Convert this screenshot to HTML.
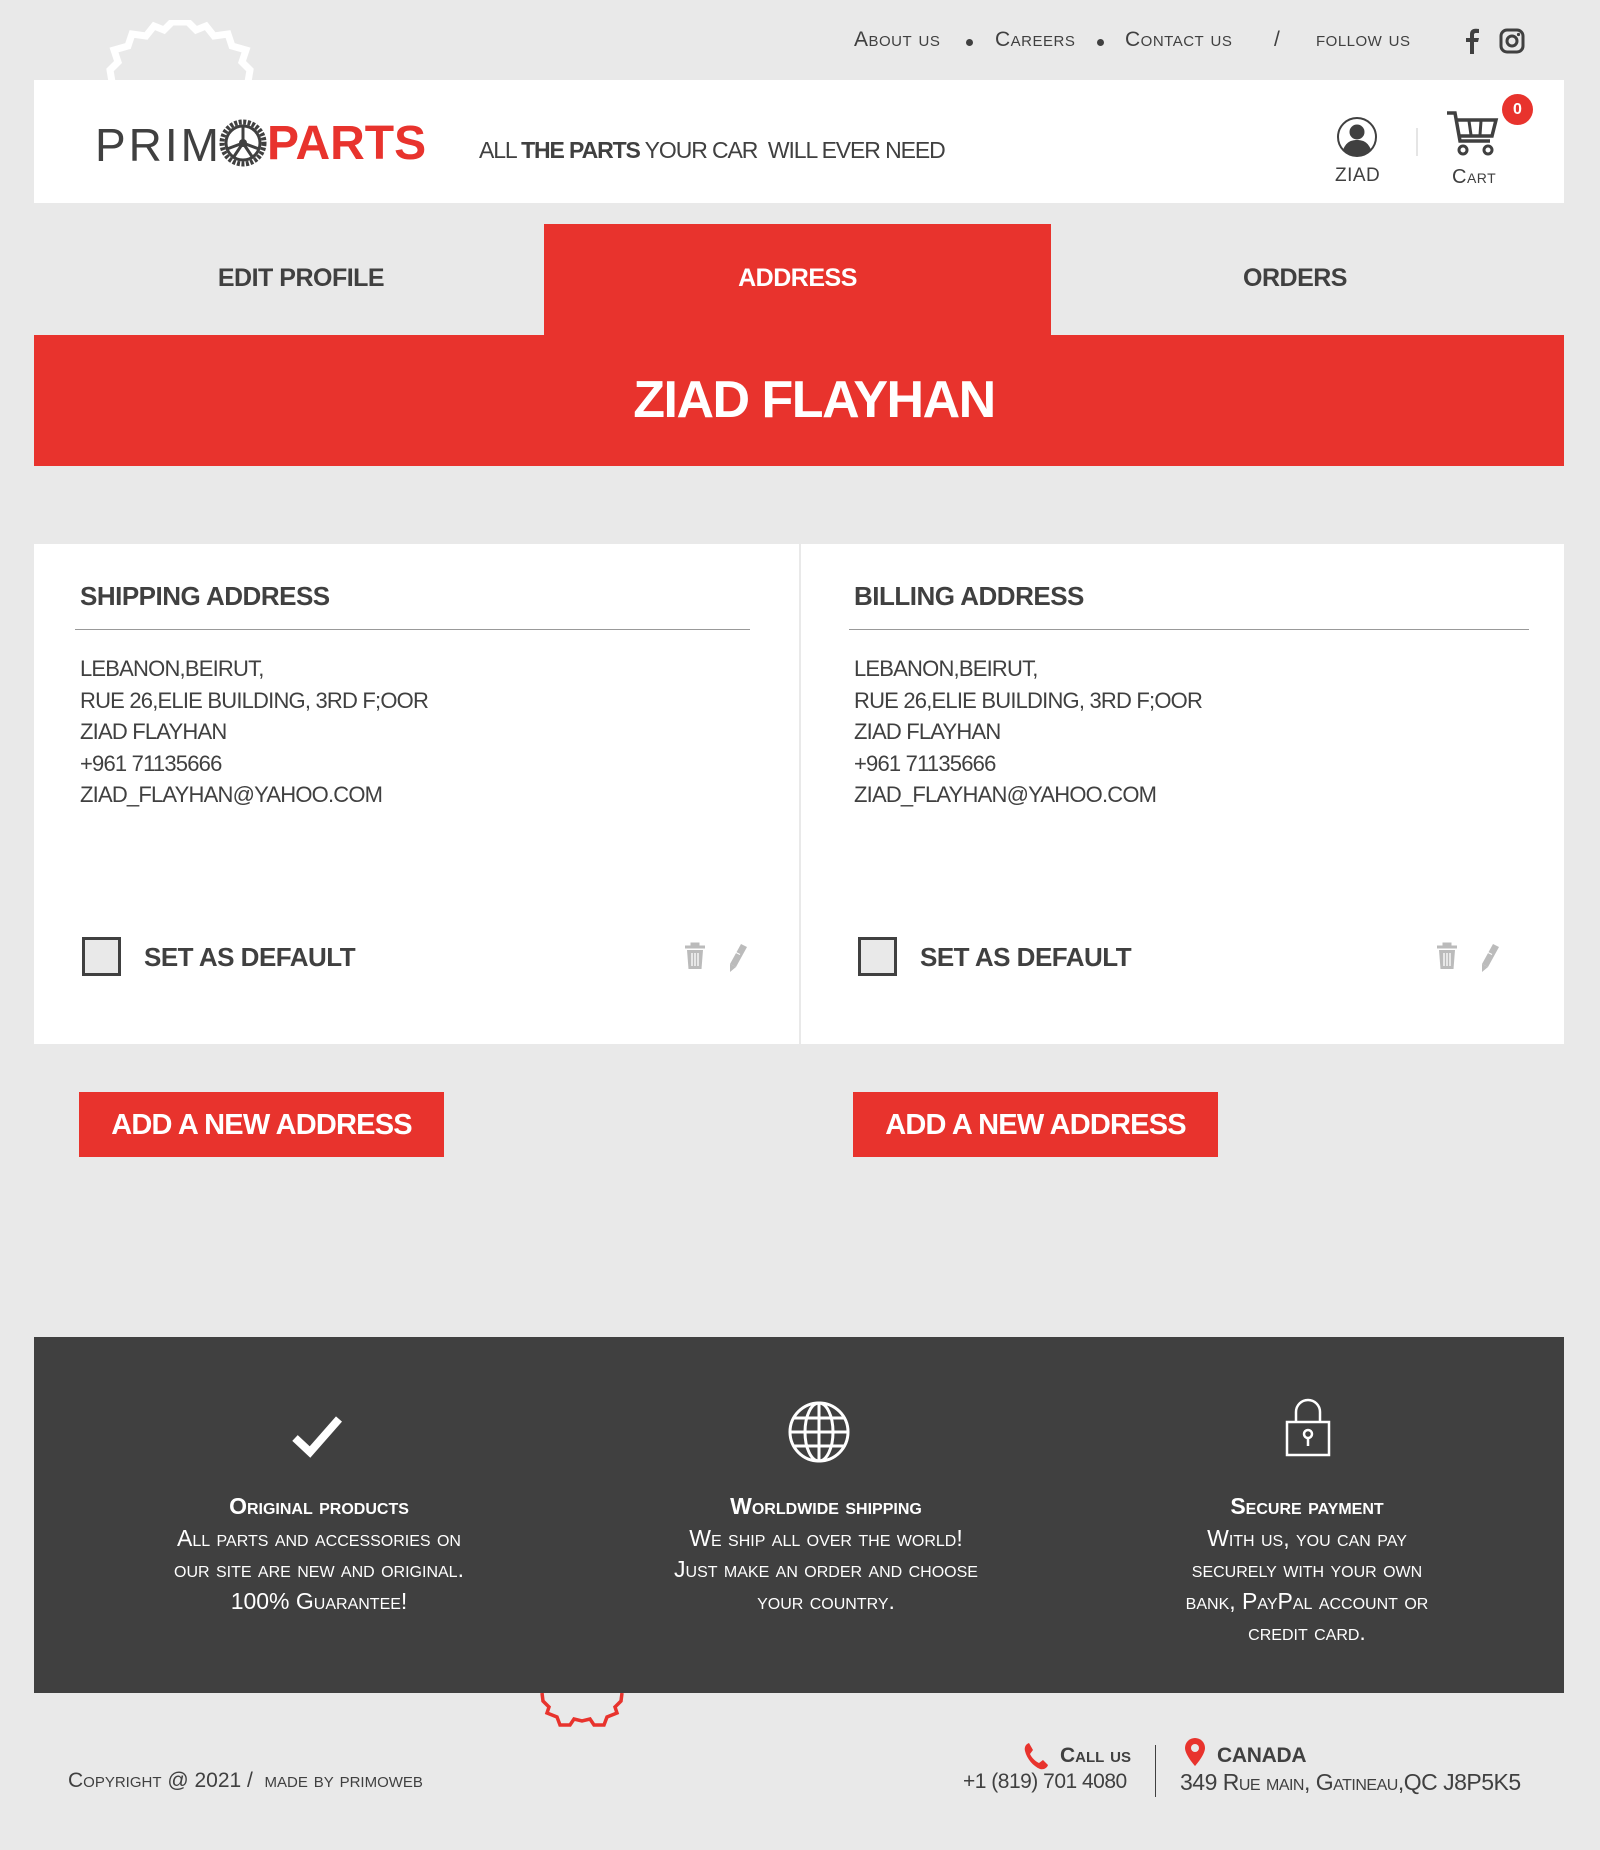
<!DOCTYPE html>
<html><head><meta charset="utf-8">
<style>
*{margin:0;padding:0;box-sizing:border-box}
body{width:1600px;height:1850px;background:#e9e9e9;font-family:"Liberation Sans",sans-serif;color:#404040;position:relative;overflow:hidden}
.a{position:absolute}
.sc{font-variant:small-caps}
.nav{top:28px;font-size:21px;letter-spacing:.5px;color:#404040}
.dot{width:7px;height:7px;border-radius:50%;background:#404040;top:39px}
.card{background:#fff;top:544px;height:500px}
.ct{font-size:26px;font-weight:bold;color:#404040;letter-spacing:-.5px}
.al{font-size:22px;line-height:31.5px;color:#404040;letter-spacing:-.8px}
.btn{background:#e8332d;color:#fff;font-weight:bold;font-size:29px;text-align:center;line-height:66px;top:1092px;width:365px;height:65px;letter-spacing:-.8px}
.ft{color:#fff;text-align:center;font-variant:small-caps;font-size:23px;line-height:31.5px;letter-spacing:0}
.ft b{display:block}
</style></head><body>
<svg class="a" style="left:100px;top:20px" width="160" height="62" viewBox="0 0 160 62"><path d="M12 62 L10 50 L18 42 L14 30 L28 26 L32 14 L46 16 L54 6 L64 10 L72 2 L88 2 L96 10 L106 6 L114 16 L128 14 L132 26 L146 30 L142 42 L150 50 L148 62" fill="none" stroke="#fff" stroke-width="7"/></svg>
<div class="a nav sc" style="left:854px">About us</div>
<div class="a dot" style="left:966px"></div>
<div class="a nav sc" style="left:995px">Careers</div>
<div class="a dot" style="left:1097px"></div>
<div class="a nav sc" style="left:1125px">Contact us</div>
<div class="a nav" style="left:1274px">/</div>
<div class="a nav sc" style="left:1316px">follow us</div>
<svg class="a" style="left:1465px;top:28px" width="14" height="26" viewBox="0 0 14 26"><path d="M9 26V14h4l1-4H9V7c0-1.2.4-2 2-2h3V1c-.6 0-2-.2-3.5-.2C7 .8 5 2.8 5 6.5V10H1v4h4v12z" fill="#404040"/></svg>
<svg class="a" style="left:1499px;top:28px" width="26" height="26" viewBox="0 0 26 26"><rect x="2" y="2" width="22" height="22" rx="6" fill="none" stroke="#404040" stroke-width="3"/><circle cx="13" cy="13" r="5" fill="none" stroke="#404040" stroke-width="3"/><circle cx="19.5" cy="6.5" r="1.6" fill="#404040"/></svg>

<div class="a" style="left:34px;top:80px;width:1530px;height:123px;background:#fff"></div>
<div class="a" style="left:95px;top:118px;font-size:46px;letter-spacing:3px;color:#404040">PRIM</div>
<svg class="a" style="left:218px;top:118px" width="50" height="50" viewBox="0 0 50 50"><circle cx="25" cy="25" r="21" fill="none" stroke="#404040" stroke-width="5" stroke-dasharray="3 1.5"/><circle cx="25" cy="25" r="17" fill="none" stroke="#404040" stroke-width="3"/><circle cx="25" cy="25" r="4" fill="#404040"/><path d="M25 8V25M25 25L9 31M25 25L41 31M25 25L15 40M25 25L35 40" stroke="#404040" stroke-width="3"/></svg>
<div class="a" style="left:267px;top:116px;font-size:48px;font-weight:bold;color:#e8332d;letter-spacing:0">PARTS</div>
<div class="a" style="left:479px;top:137px;font-size:23px;color:#404040;letter-spacing:-1.1px">ALL <b>THE PARTS</b> YOUR CAR &nbsp;WILL EVER NEED</div>
<svg class="a" style="left:1336px;top:116px" width="42" height="42" viewBox="0 0 42 42"><circle cx="21" cy="21" r="19" fill="none" stroke="#404040" stroke-width="2"/><circle cx="21" cy="16" r="7.5" fill="#404040"/><path d="M7 34c3-8 8-10 14-10s11 2 14 10c-4 4-9 6-14 6s-10-2-14-6z" fill="#404040"/></svg>
<div class="a" style="left:1335px;top:165px;font-size:19px;letter-spacing:.5px">ZIAD</div>
<div class="a" style="left:1416px;top:128px;width:2px;height:28px;background:#e5e5e5"></div>
<svg class="a" style="left:1445px;top:110px" width="56" height="48" viewBox="0 0 56 48"><path d="M2 3h8l5 28h30" fill="none" stroke="#404040" stroke-width="3.5"/><path d="M11 10h40l-4 16H14" fill="none" stroke="#404040" stroke-width="3.5"/><path d="M24 11l2 14M36 11l-1 14" stroke="#404040" stroke-width="3"/><circle cx="18" cy="40" r="4" fill="none" stroke="#404040" stroke-width="3"/><circle cx="43" cy="40" r="4" fill="none" stroke="#404040" stroke-width="3"/></svg>
<div class="a" style="left:1502px;top:94px;width:31px;height:31px;border-radius:50%;background:#e8332d;color:#fff;font-weight:bold;font-size:16px;text-align:center;line-height:31px">0</div>
<div class="a sc" style="left:1452px;top:166px;font-size:20px;letter-spacing:.5px">Cart</div>

<div class="a" style="left:34px;top:224px;width:534px;height:111px;font-size:25px;font-weight:bold;text-align:center;line-height:108px;color:#404040;letter-spacing:-.5px">EDIT PROFILE</div>
<div class="a" style="left:544px;top:224px;width:507px;height:112px;background:#e8332d;font-size:25px;font-weight:bold;text-align:center;line-height:108px;color:#fff;letter-spacing:-.5px">ADDRESS</div>
<div class="a" style="left:1051px;top:224px;width:488px;height:111px;font-size:25px;font-weight:bold;text-align:center;line-height:108px;color:#404040;letter-spacing:-.5px">ORDERS</div>
<div class="a" style="left:34px;top:335px;width:1530px;height:131px;background:#e8332d;color:#fff;font-weight:bold;font-size:52px;text-align:center;line-height:131px;letter-spacing:-1.5px;text-indent:30px">ZIAD FLAYHAN</div>

<div class="a card" style="left:34px;width:765px"></div>
<div class="a card" style="left:801px;width:763px"></div>
<div class="a ct" style="left:80px;top:581px">SHIPPING ADDRESS</div>
<div class="a" style="left:75px;top:629px;width:675px;height:1px;background:#999"></div>
<div class="a al" style="left:80px;top:653px">LEBANON,BEIRUT,<br>RUE 26,ELIE BUILDING, 3RD F;OOR<br>ZIAD FLAYHAN<br>+961 71135666<br>ZIAD_FLAYHAN@YAHOO.COM</div>
<div class="a ct" style="left:854px;top:581px">BILLING ADDRESS</div>
<div class="a" style="left:849px;top:629px;width:680px;height:1px;background:#999"></div>
<div class="a al" style="left:854px;top:653px">LEBANON,BEIRUT,<br>RUE 26,ELIE BUILDING, 3RD F;OOR<br>ZIAD FLAYHAN<br>+961 71135666<br>ZIAD_FLAYHAN@YAHOO.COM</div>

<div class="a" style="left:82px;top:937px;width:39px;height:39px;border:3px solid #404040;background:#e9e9e9"></div>
<div class="a ct" style="left:144px;top:942px">SET AS DEFAULT</div>
<div class="a" style="left:858px;top:937px;width:39px;height:39px;border:3px solid #404040;background:#e9e9e9"></div>
<div class="a ct" style="left:920px;top:942px">SET AS DEFAULT</div>

<svg class="a" style="left:683px;top:942px" width="24" height="28" viewBox="0 0 24 28"><path d="M2 5h20M9 5V2h6v3" stroke="#bbb" stroke-width="3" fill="none"/><path d="M4 8h16l-1.5 19h-13z" fill="#bbb"/><path d="M9 11v13M12 11v13M15 11v13" stroke="#fff" stroke-width="1.3"/></svg>
<svg class="a" style="left:727px;top:942px" width="22" height="30" viewBox="0 0 22 30"><path d="M14 2l6 3-11 20-6-3z" fill="#bbb"/><path d="M3 22l6 3-6 5z" fill="#bbb"/><path d="M8 10l5 2.5" stroke="#fff" stroke-width="1"/></svg>
<svg class="a" style="left:1435px;top:942px" width="24" height="28" viewBox="0 0 24 28"><path d="M2 5h20M9 5V2h6v3" stroke="#bbb" stroke-width="3" fill="none"/><path d="M4 8h16l-1.5 19h-13z" fill="#bbb"/><path d="M9 11v13M12 11v13M15 11v13" stroke="#fff" stroke-width="1.3"/></svg>
<svg class="a" style="left:1479px;top:942px" width="22" height="30" viewBox="0 0 22 30"><path d="M14 2l6 3-11 20-6-3z" fill="#bbb"/><path d="M3 22l6 3-6 5z" fill="#bbb"/><path d="M8 10l5 2.5" stroke="#fff" stroke-width="1"/></svg>

<div class="a btn" style="left:79px">ADD A NEW ADDRESS</div>
<div class="a btn" style="left:853px">ADD A NEW ADDRESS</div>

<div class="a" style="left:34px;top:1337px;width:1530px;height:356px;background:#404040"></div>
<svg class="a" style="left:292px;top:1414px" width="50" height="44" viewBox="0 0 50 44"><path d="M3 24l15 14L47 5" fill="none" stroke="#fff" stroke-width="8"/></svg>
<svg class="a" style="left:787px;top:1400px" width="64" height="64" viewBox="0 0 64 64" fill="none" stroke="#fff" stroke-width="3"><circle cx="32" cy="32" r="29"/><ellipse cx="32" cy="32" rx="14" ry="29"/><path d="M32 3v58M3 32h58M7 18h50M7 46h50"/></svg>
<svg class="a" style="left:1284px;top:1398px" width="48" height="60" viewBox="0 0 48 60" fill="none" stroke="#fff" stroke-width="2.5"><path d="M12 24V14a12 12 0 0124 0v10"/><rect x="3" y="24" width="42" height="33"/><circle cx="24" cy="36" r="4"/><path d="M24 40v8"/></svg>
<div class="a ft" style="left:116px;top:1491px;width:406px"><b>Original products</b>All parts and accessories on<br>our site are new and original.<br>100% Guarantee!</div>
<div class="a ft" style="left:626px;top:1491px;width:400px"><b>Worldwide shipping</b>We ship all over the world!<br>Just make an order and choose<br>your country.</div>
<div class="a ft" style="left:1107px;top:1491px;width:400px"><b>Secure payment</b>With us, you can pay<br>securely with your own<br>bank, PayPal account or<br>credit card.</div>

<svg class="a" style="left:540px;top:1693px" width="92" height="34" viewBox="0 0 92 34"><path d="M2 0l1 8 6 6-2 6 10 4 3 8h10l4-6 8 2 8-2 4 6h10l3-8 10-4-2-6 6-6 1-8" fill="none" stroke="#e8332d" stroke-width="3.5"/></svg>

<div class="a sc" style="left:68px;top:1769px;font-size:21px;letter-spacing:0">Copyright @ 2021 / &nbsp;made by primoweb</div>
<svg class="a" style="left:1023px;top:1741px" width="30" height="30" viewBox="0 0 30 30"><path d="M6 2c-3 1-5 4-4 8 2 8 8 15 15 18 4 1 7-1 8-4l-5-5-4 3c-4-2-7-5-9-9l3-4z" fill="#e8332d"/></svg>
<div class="a sc" style="left:1060px;top:1744px;font-size:21px;font-weight:bold;letter-spacing:0">Call us</div>
<div class="a" style="left:963px;top:1770px;font-size:21px;letter-spacing:-.5px">+1 (819) 701 4080</div>
<div class="a" style="left:1155px;top:1745px;width:1px;height:52px;background:#404040"></div>
<svg class="a" style="left:1184px;top:1737px" width="22" height="30" viewBox="0 0 22 30"><path d="M11 1a10 10 0 00-10 10c0 7 10 18 10 18s10-11 10-18A10 10 0 0011 1z" fill="#e8332d"/><circle cx="11" cy="11" r="4" fill="#e9e9e9"/></svg>
<div class="a" style="left:1217px;top:1744px;font-size:21px;font-weight:bold;letter-spacing:-.3px">CANADA</div>
<div class="a sc" style="left:1180px;top:1769px;font-size:23px;letter-spacing:-.5px">349 Rue main, Gatineau,QC J8P5K5</div>
</body></html>
